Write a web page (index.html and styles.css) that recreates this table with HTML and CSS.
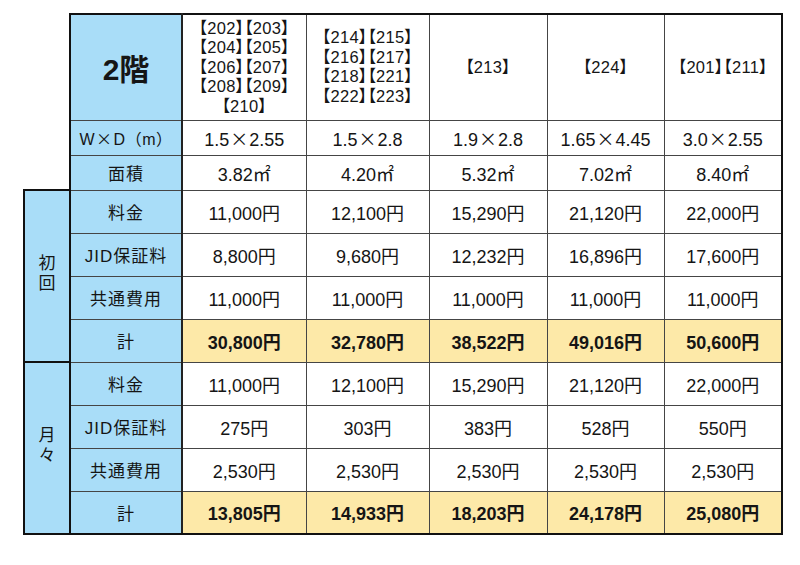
FILE: index.html
```html
<!DOCTYPE html>
<html lang="ja">
<head>
<meta charset="utf-8">
<link rel="stylesheet" href="styles.css">
</head>
<body>
<table class="price">
  <colgroup>
    <col class="c-group">
    <col class="c-label">
    <col class="c1">
    <col class="c2">
    <col class="c3">
    <col class="c4">
    <col class="c5">
  </colgroup>
  <tr class="r-head">
    <td class="blank" rowspan="3"></td>
    <th class="label floor first-row">2階</th>
    <td class="rooms first-row">【202】【203】<br>【204】【205】<br>【206】【207】<br>【208】【209】<br>【210】</td>
    <td class="rooms first-row">【214】【215】<br>【216】【217】<br>【218】【221】<br>【222】【223】</td>
    <td class="rooms first-row">【213】</td>
    <td class="rooms first-row">【224】</td>
    <td class="rooms first-row last-col">【201】【211】</td>
  </tr>
  <tr class="r-dim">
    <th class="label dim-label">W<span class="x">×</span>D（m）</th>
    <td>1.5<span class="x">×</span>2.55</td>
    <td>1.5<span class="x">×</span>2.8</td>
    <td>1.9<span class="x">×</span>2.8</td>
    <td>1.65<span class="x">×</span>4.45</td>
    <td class="last-col">3.0<span class="x">×</span>2.55</td>
  </tr>
  <tr class="r-dim">
    <th class="label">面積</th>
    <td>3.82㎡</td>
    <td>4.20㎡</td>
    <td>5.32㎡</td>
    <td>7.02㎡</td>
    <td class="last-col">8.40㎡</td>
  </tr>
  <tr class="r-row">
    <th class="group" rowspan="4"><span class="vert">初回</span></th>
    <th class="label">料金</th>
    <td>11,000円</td>
    <td>12,100円</td>
    <td>15,290円</td>
    <td>21,120円</td>
    <td class="last-col">22,000円</td>
  </tr>
  <tr class="r-row">
    <th class="label">JID保証料</th>
    <td>8,800円</td>
    <td>9,680円</td>
    <td>12,232円</td>
    <td>16,896円</td>
    <td class="last-col">17,600円</td>
  </tr>
  <tr class="r-row">
    <th class="label">共通費用</th>
    <td>11,000円</td>
    <td>11,000円</td>
    <td>11,000円</td>
    <td>11,000円</td>
    <td class="last-col">11,000円</td>
  </tr>
  <tr class="r-row total">
    <th class="label">計</th>
    <td>30,800円</td>
    <td>32,780円</td>
    <td>38,522円</td>
    <td>49,016円</td>
    <td class="last-col">50,600円</td>
  </tr>
  <tr class="r-row">
    <th class="group" rowspan="4"><span class="vert">月々</span></th>
    <th class="label">料金</th>
    <td>11,000円</td>
    <td>12,100円</td>
    <td>15,290円</td>
    <td>21,120円</td>
    <td class="last-col">22,000円</td>
  </tr>
  <tr class="r-row">
    <th class="label">JID保証料</th>
    <td>275円</td>
    <td>303円</td>
    <td>383円</td>
    <td>528円</td>
    <td class="last-col">550円</td>
  </tr>
  <tr class="r-row">
    <th class="label">共通費用</th>
    <td>2,530円</td>
    <td>2,530円</td>
    <td>2,530円</td>
    <td>2,530円</td>
    <td class="last-col">2,530円</td>
  </tr>
  <tr class="r-row total last-row">
    <th class="label">計</th>
    <td>13,805円</td>
    <td>14,933円</td>
    <td>18,203円</td>
    <td>24,178円</td>
    <td class="last-col">25,080円</td>
  </tr>
</table>
</body>
</html>
```

FILE: styles.css
```css
html, body {
  margin: 0;
  padding: 0;
  background: #ffffff;
}

body {
  padding: 13px 0 0 23px;
  font-family: "Liberation Sans", "Noto Sans CJK JP", sans-serif;
  color: #151515;
}

.price {
  border-collapse: collapse;
  table-layout: fixed;
  width: 760px;
}

.c-group { width: 46px; }
.c-label { width: 112px; }
.c1 { width: 124px; }
.c2 { width: 123px; }
.c3 { width: 118px; }
.c4 { width: 117px; }
.c5 { width: 118px; }

.price th,
.price td {
  border: 1px solid #454545;
  padding: 0;
  text-align: center;
  vertical-align: middle;
  font-size: 18px;
  font-weight: normal;
  white-space: nowrap;
}

.price td.blank {
  border: none;
}

.r-head { height: 106px; }
.r-dim { height: 35px; }
.r-row { height: 43px; }

.price .first-row { border-top: 2px solid #111; }
.price .last-col { border-right: 2px solid #111; }
.price .last-row th,
.price .last-row td { border-bottom: 2px solid #111; }

.price th.label {
  background: #a9ddf8;
  font-family: "Liberation Sans", "Noto Sans CJK JP", sans-serif;
  font-size: 17px;
  letter-spacing: 1px;
  border-left: 2px solid #111;
  border-right: 2px solid #222;
}

.price th.dim-label {
  font-size: 16px;
  letter-spacing: 0.5px;
}

.price th.floor {
  font-size: 30px;
  font-weight: bold;
  letter-spacing: 0;
}

.price th.group {
  background: #a9ddf8;
  border: 2px solid #111;
  font-family: "Noto Sans CJK JP", sans-serif;
  font-size: 17px;
}

.x {
  font-family: "Noto Sans CJK JP", sans-serif;
  padding: 0 1px;
}

.vert {
  display: inline-block;
  writing-mode: vertical-rl;
  text-orientation: upright;
  line-height: 1;
  letter-spacing: 3px;
}

.price td.rooms {
  font-family: "Liberation Sans", "Noto Sans CJK JP", sans-serif;
  font-feature-settings: "palt" 1;
  font-size: 16.5px;
  line-height: 19.5px;
  letter-spacing: 0.3px;
}

.total td {
  background: #fde9a8;
  font-weight: bold;
}
```
